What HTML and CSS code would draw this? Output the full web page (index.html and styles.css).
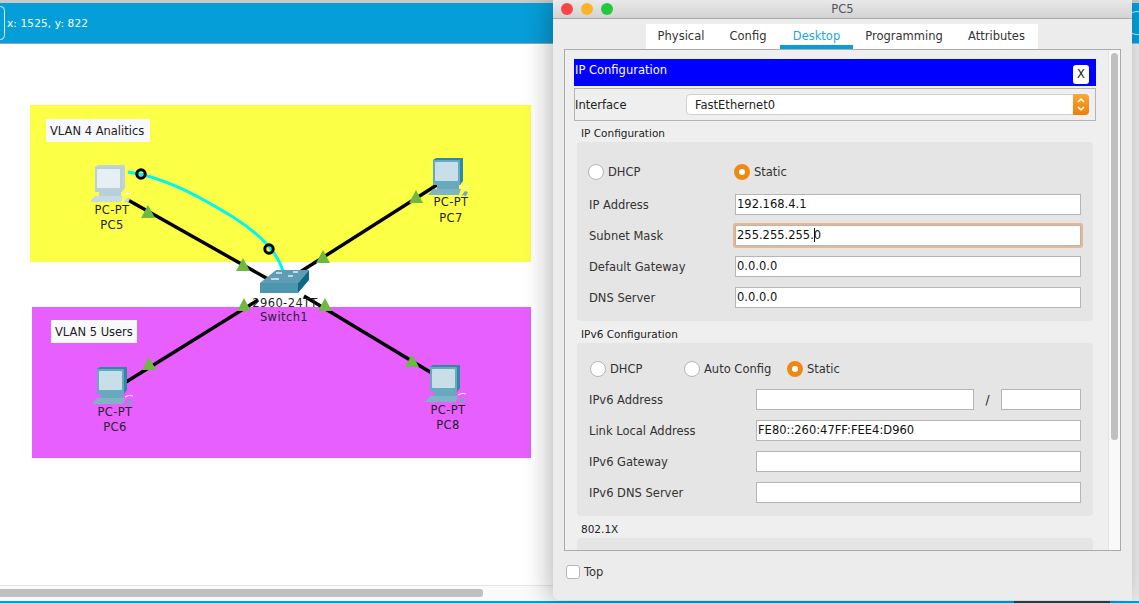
FILE: index.html
```html
<!DOCTYPE html>
<html lang="en">
<head>
  <meta charset="UTF-8" />
  <title>Packet Tracer - PC5</title>
  <link rel="stylesheet" href="styles.css">
</head>
<body>

<div class="workspace">
  <div class="topbar">
    <span class="topbar-btn"></span>
    <span class="coords">x: 1525, y: 822</span>
  </div>

  <svg class="canvas" width="1139" height="541" viewBox="0 44 1139 541">
    <defs>
      <!-- one PC icon, colours come from the class on <use> -->
      <symbol id="pc" width="42" height="40" viewBox="0 0 42 40">
        <polygon class="pc-side" points="5,3 8,1 35,1 35,24 32,28 5,28"/>
        <rect class="pc-front" x="5" y="3" width="27" height="25" rx="1"/>
        <rect class="pc-screen" x="7" y="5" width="23" height="19" rx="1"/>
        <rect class="pc-front" x="9" y="28" width="22" height="4"/>
        <polygon class="pc-key" points="0,38 5,32 33,32 31,38"/>
        <polygon class="pc-mouse" points="34,38 37,34 40,35 38,39"/>
        <path class="pc-cord" d="M33 31 Q37 28 41 30" fill="none"/>
      </symbol>
      <symbol id="tri" width="14" height="14" viewBox="0 0 14 14">
        <polygon points="7,0 14,13 0,13" fill="#6fb943"/>
      </symbol>
    </defs>

    <rect class="zone-yellow" x="30" y="105" width="501" height="157"/>
    <rect class="zone-purple" x="32" y="307" width="499" height="151"/>

    <rect class="zone-tag" x="46" y="119" width="104" height="23"/>
    <text class="zone-text" x="50" y="135">VLAN 4 Analitics</text>
    <rect class="zone-tag" x="51" y="320" width="86" height="23"/>
    <text class="zone-text" x="55" y="336">VLAN 5 Users</text>

    <path class="link" d="M128 200 L268 279"/>
    <path class="link" d="M300 272 L440 183"/>
    <path class="link" d="M118 387 L258 300"/>
    <path class="link" d="M304 296 L440 378"/>
    <path class="link-console" d="M128 172 C165 177 200 197 233 217 C255 231 277 250 283 271"/>
    <circle class="link-dot" cx="141" cy="174" r="4.2"/>
    <circle class="link-dot" cx="269" cy="249" r="4.2"/>

    <use href="#tri" x="141" y="205"/>
    <use href="#tri" x="236" y="258"/>
    <use href="#tri" x="409" y="190"/>
    <use href="#tri" x="316" y="250"/>
    <use href="#tri" x="142" y="357"/>
    <use href="#tri" x="237" y="298"/>
    <use href="#tri" x="405" y="354"/>
    <use href="#tri" x="318" y="298"/>

    <use class="pc-pale" href="#pc" x="90" y="164"/>
    <use class="pc-teal" href="#pc" x="428" y="157"/>
    <use class="pc-teal" href="#pc" x="92" y="366"/>
    <use class="pc-teal" href="#pc" x="425" y="364"/>

    <!-- switch -->
    <polygon fill="#5f9db5" points="260,283 276,270 309,270 298,283"/>
    <polygon fill="#4d94ae" points="260,283 298,283 298,293 260,293"/>
    <polygon fill="#0c6a84" points="298,283 309,270 309,280 298,293"/>
    <path class="sw-ports" d="M276 273 h6 M293 272 h5 M271 279 h8 M288 276 h5"/>

    <text class="node-text" x="112" y="214">PC-PT</text>
    <text class="node-text" x="112" y="229">PC5</text>
    <text class="node-text" x="451" y="206">PC-PT</text>
    <text class="node-text" x="451" y="222">PC7</text>
    <text class="node-text" x="115" y="416">PC-PT</text>
    <text class="node-text" x="115" y="431">PC6</text>
    <text class="node-text" x="448" y="414">PC-PT</text>
    <text class="node-text" x="448" y="429">PC8</text>
    <text class="node-text" x="285" y="307">2960-24TT</text>
    <text class="node-text" x="284" y="321">Switch1</text>
  </svg>

  <div class="hscroll"><div class="hscroll-thumb"></div></div>
  <div class="bottom-line"></div>
</div>

<div class="window">
  <div class="titlebar">
    <div class="lights">
      <span class="light red"></span>
      <span class="light yellow"></span>
      <span class="light green"></span>
    </div>
    <span class="title">PC5</span>
  </div>

  <div class="tabs">
    <span class="tab tab-physical">Physical</span>
    <span class="tab tab-config">Config</span>
    <span class="tab tab-desktop active">Desktop</span>
    <span class="tab tab-programming">Programming</span>
    <span class="tab tab-attributes">Attributes</span>
  </div>

  <div class="panel">
    <div class="panel-body">
      <div class="app-header">
        <span class="app-title">IP Configuration</span>
        <span class="close-btn">X</span>
      </div>

      <div class="iface-row">
        <span class="iface-label">Interface</span>
        <div class="select">
          <span>FastEthernet0</span>
          <span class="select-arrow">
            <svg width="16" height="21" viewBox="0 0 16 21"><path d="M5 8 L8 5 L11 8 M5 13 L8 16 L11 13" fill="none" stroke="#fff" stroke-width="1.5"/></svg>
          </span>
        </div>
      </div>

      <div class="group-label">IP Configuration</div>
      <div class="group group-v4">
        <div class="radio-row">
          <label class="radio-item v4-dhcp"><span class="radio"></span>DHCP</label>
          <label class="radio-item v4-static"><span class="radio on"></span>Static</label>
        </div>
        <div class="form-row"><span class="form-label">IP Address</span><div class="field">192.168.4.1</div></div>
        <div class="form-row"><span class="form-label">Subnet Mask</span><div class="field focused">255.255.255.<span class="caret"></span>0</div></div>
        <div class="form-row"><span class="form-label">Default Gateway</span><div class="field">0.0.0.0</div></div>
        <div class="form-row"><span class="form-label">DNS Server</span><div class="field">0.0.0.0</div></div>
      </div>

      <div class="group-label">IPv6 Configuration</div>
      <div class="group group-v6">
        <div class="radio-row">
          <label class="radio-item v6-dhcp"><span class="radio"></span>DHCP</label>
          <label class="radio-item v6-auto"><span class="radio"></span>Auto Config</label>
          <label class="radio-item"><span class="radio on"></span>Static</label>
        </div>
        <div class="form-row">
          <span class="form-label">IPv6 Address</span>
          <div class="field field-addr"></div>
          <span class="slash">/</span>
          <div class="field field-prefix"></div>
        </div>
        <div class="form-row"><span class="form-label">Link Local Address</span><div class="field">FE80::260:47FF:FEE4:D960</div></div>
        <div class="form-row"><span class="form-label">IPv6 Gateway</span><div class="field"></div></div>
        <div class="form-row"><span class="form-label">IPv6 DNS Server</span><div class="field"></div></div>
      </div>

      <div class="group-label">802.1X</div>
      <div class="group group-dot1x"></div>
    </div>
    <div class="vscroll"><div class="vscroll-thumb"></div></div>
  </div>

  <label class="top-check"><span class="checkbox"></span>Top</label>
</div>

<div class="edge"></div>
<div class="dock-pill"></div>

</body>
</html>
```

FILE: styles.css
```css
/* --- Page --- */
body {
  margin: 0;
  width: 1139px;
  height: 603px;
  overflow: hidden;
  position: relative;
  background: #fff;
  font-family: 'DejaVu Sans', sans-serif;
  font-size: 12px;
  color: #222;
}

/* --- Main workspace (left) --- */
.workspace {
  display: flex;
  flex-direction: column;
  height: 603px;
}

.topbar {
  box-sizing: border-box;
  height: 44px;
  flex: none;
  border-top: 3px solid #c9c9c9;
  border-bottom: 1px solid #9aa5ab;
  background: #069ed9;
  display: flex;
  align-items: center;
  color: #fff;
  font-size: 10.5px;
  letter-spacing: 0.15px;
}

.topbar-btn {
  width: 7px;
  height: 32px;
  margin-left: -4px;
  margin-right: 2px;
  border: 1px solid #d5eefa;
  border-radius: 6px;
}

.canvas {
  display: block;
  flex: none;
}

.zone-yellow { fill: #fbff45; }
.zone-purple { fill: #e75fff; }
.zone-tag { fill: #f8f9fd; }
.zone-text { font-size: 11.5px; fill: #1c1c22; }

.node-text {
  font-size: 11.5px;
  fill: #1f1f28;
  text-anchor: middle;
  letter-spacing: 0.4px;
}

.link { stroke: #000; stroke-width: 3.4; fill: none; }
.link-console { stroke: #00f5f5; stroke-width: 3; fill: none; }
.link-dot { fill: none; stroke: #000; stroke-width: 3; }
.sw-ports { stroke: #dfeef3; stroke-width: 1.3; fill: none; }

/* PC icon colours */
.pc-teal {
  --side: #2f88a4;
  --front: #69a9bf;
  --screen: #c8dfe8;
  --key: #7fb3c6;
  --mouse: #6fa8bd;
}
.pc-pale {
  --side: #c3d2d9;
  --front: #b7d0da;
  --screen: #e5eff4;
  --key: #c6dbe3;
  --mouse: #c8d6dc;
}
.pc-side { fill: var(--side); }
.pc-front { fill: var(--front); }
.pc-screen { fill: var(--screen); }
.pc-key { fill: var(--key); }
.pc-mouse { fill: var(--mouse); }
.pc-cord { stroke: #fff; stroke-width: 1; }

.hscroll {
  box-sizing: border-box;
  height: 16px;
  flex: none;
  border-top: 1px solid #e4e4e4;
  padding: 3px 0;
  background: #fafafa;
}

.hscroll-thumb {
  width: 483px;
  height: 8px;
  background: #c0c0c0;
  border-radius: 0 3px 3px 0;
}

.bottom-line {
  height: 2px;
  flex: none;
  background: #069ed9;
}

/* strip to the right of the window */
.edge {
  position: absolute;
  top: 3px;
  left: 1132px;
  width: 7px;
  height: 598px;
  background: linear-gradient(to bottom, #069ed9 0, #069ed9 40px, #ececec 41px);
}

.edge::before {
  content: "";
  position: absolute;
  top: 8px;
  left: -6px;
  width: 22px;
  height: 24px;
  box-sizing: border-box;
  border: 1px solid #bfe6f7;
  border-radius: 50%;
}

.dock-pill {
  position: absolute;
  top: 601px;
  left: 1014px;
  width: 96px;
  height: 2px;
  background: #2b3a42;
  z-index: 3;
}

/* --- PC5 window --- */
.window {
  position: absolute;
  top: 0;
  left: 553px;
  width: 579px;
  height: 600px;
  box-sizing: border-box;
  background: #ececec;
  border-radius: 0 0 6px 6px;
  box-shadow: -4px 0 26px rgba(0, 0, 0, 0.28);
  z-index: 2;
}

.titlebar {
  box-sizing: border-box;
  height: 19px;
  border-bottom: 1px solid #a9a9a9;
  background: linear-gradient(#e9e9e9, #d3d3d3);
  border-radius: 5px 5px 0 0;
  display: flex;
  align-items: center;
  position: relative;
}

.lights {
  display: flex;
  gap: 8px;
  margin-left: 8px;
}

.light {
  width: 12px;
  height: 12px;
  border-radius: 50%;
}
.light.red { background: #fc4544; }
.light.yellow { background: #fdb424; }
.light.green { background: #22c93c; }

.title {
  position: absolute;
  left: 0;
  right: 0;
  text-align: center;
  font-size: 11.5px;
  color: #555;
}

.tabs {
  display: flex;
  width: 392px;
  height: 25px;
  margin: 5px 0 0 93px;
  background: #fff;
}

.tab {
  box-sizing: border-box;
  height: 25px;
  line-height: 24px;
  text-align: center;
  font-size: 11.5px;
  color: #333;
}
.tab-physical { width: 70px; }
.tab-config { width: 64px; }
.tab-desktop { width: 73px; }
.tab-programming { width: 102px; }
.tab-attributes { width: 83px; }

.tab.active {
  color: #1ea5dc;
  border-bottom: 4px solid #069ed9;
}

.panel {
  box-sizing: border-box;
  display: flex;
  height: 502px;
  width: 557px;
  margin-left: 11px;
  border: 1px solid #ababab;
  background: #efefef;
  overflow: hidden;
}

.panel-body {
  flex: 1;
  min-width: 0;
  padding: 9px 0 0 9px;
}

.app-header {
  width: 522px;
  height: 27px;
  box-sizing: border-box;
  background: #0000ff;
  color: #fff;
  padding-left: 1px;
  font-size: 11.5px;
  display: flex;
  justify-content: space-between;
  align-items: center;
}

.app-title { margin-top: -5px; }

.close-btn {
  width: 16px;
  height: 19px;
  margin: 3px 7px 0 0;
  background: #fff;
  color: #222;
  border-radius: 3px;
  text-align: center;
  line-height: 19px;
}

.iface-row {
  width: 522px;
  height: 33px;
  box-sizing: border-box;
  margin-top: 2px;
  border: 1px solid #b4b4b4;
  display: flex;
  align-items: center;
}

.iface-label {
  width: 111px;
  font-size: 11.5px;
}

.select {
  box-sizing: border-box;
  width: 403px;
  height: 21px;
  display: flex;
  justify-content: space-between;
  align-items: center;
  padding-left: 8px;
  background: #fff;
  border: 1px solid #d0d0d0;
  border-radius: 4px;
  font-size: 11.5px;
}

.select-arrow {
  width: 16px;
  height: 21px;
  margin-right: -1px;
  background: linear-gradient(#f6a83a, #ee7f07);
  border-radius: 0 4px 4px 0;
}

.group-label {
  margin: 4px 0 0 7px;
  height: 16px;
  line-height: 16px;
  font-size: 10.5px;
  color: #222;
}

.group {
  box-sizing: border-box;
  width: 516px;
  margin: 1px 0 0 3px;
  padding: 0 12px 0 12px;
  background: #e5e5e5;
  border-radius: 4px;
}

.group-v4 {
  height: 179px;
  padding-top: 20px;
  margin-bottom: 5px;
}

.group-v6 {
  height: 173px;
  padding-top: 16px;
  margin-bottom: 5px;
}

.group-dot1x { height: 40px; }

.radio-row {
  display: flex;
  height: 20px;
  align-items: center;
}

.radio-item {
  display: flex;
  align-items: center;
  gap: 4px;
  font-size: 11.5px;
  color: #333;
}

.v4-dhcp { width: 146px; margin-left: -1px; }
.v6-dhcp { width: 94px; margin-left: 1px; }
.v6-auto { width: 103px; }

.radio {
  box-sizing: border-box;
  width: 16px;
  height: 16px;
  border-radius: 50%;
  background: #fff;
  border: 1px solid #b5b5b5;
}

.radio.on {
  background: #fff;
  border: 5px solid #ee8a14;
}

.form-row {
  display: flex;
  align-items: center;
  height: 21px;
  margin-top: 10px;
}

.group-v4 .radio-row + .form-row { margin-top: 12px; }

.form-label {
  width: 146px;
  flex: none;
  font-size: 11.5px;
  color: #333;
}

.group-v6 .form-label { width: 167px; }

.field {
  box-sizing: border-box;
  flex: none;
  width: 346px;
  height: 21px;
  line-height: 19px;
  padding-left: 1px;
  background: #fff;
  border: 1px solid #b5b5b5;
  font-size: 11.5px;
  white-space: nowrap;
  color: #111;
}

.group-v6 .field { width: 325px; }
.group-v6 .field-addr { width: 218px; }
.group-v6 .field-prefix { width: 80px; }

.field.focused {
  box-shadow: 0 0 0 2px #e9b68e;
  border-radius: 1px;
}

.caret {
  display: inline-block;
  width: 1px;
  height: 14px;
  margin-right: -1px;
  vertical-align: -3px;
  background: #111;
}

.slash {
  width: 27px;
  flex: none;
  text-align: center;
}

.vscroll {
  width: 12px;
  flex: none;
  padding: 3px 2px 0;
  box-sizing: border-box;
  background: #f9f9f9;
  border-left: 1px solid #e4e4e4;
}

.vscroll-thumb {
  height: 387px;
  background: #c0c0c0;
  border-radius: 4px;
}

.top-check {
  display: flex;
  align-items: center;
  gap: 4px;
  margin: 14px 0 0 13px;
  font-size: 11.5px;
  color: #333;
}

.checkbox {
  box-sizing: border-box;
  width: 14px;
  height: 14px;
  background: #fff;
  border: 1px solid #b5b5b5;
  border-radius: 3px;
}
```
